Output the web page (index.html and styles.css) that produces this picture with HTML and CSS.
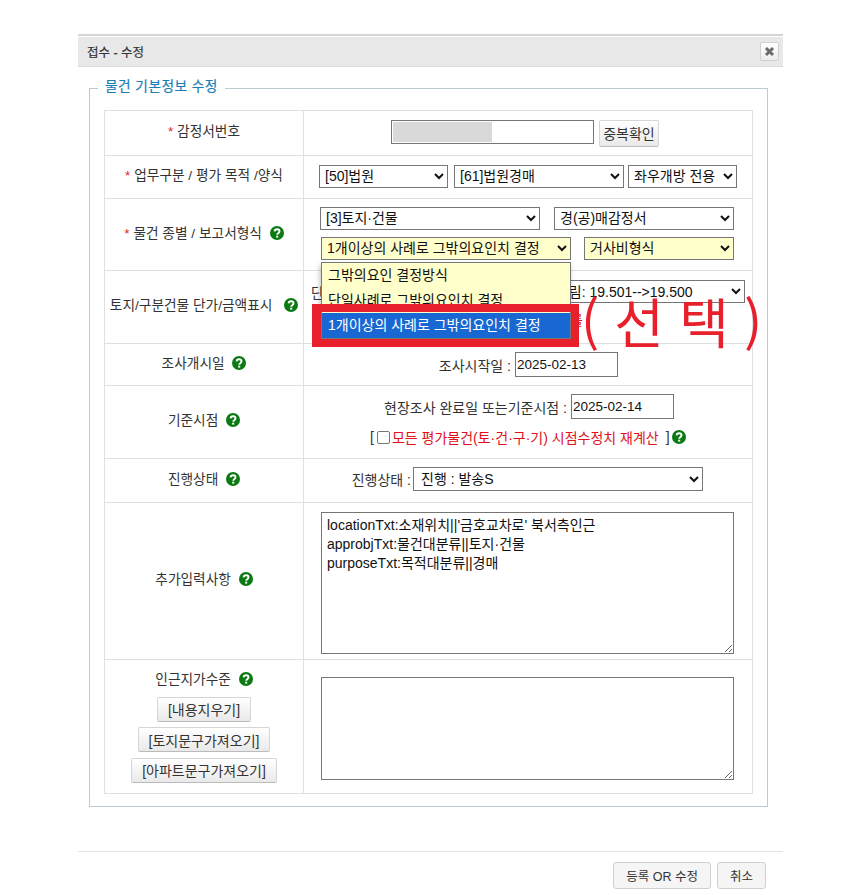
FILE: index.html
```html
<!DOCTYPE html>
<html lang="ko">
<head>
<meta charset="utf-8">
<title>접수 - 수정</title>
<link rel="stylesheet" href="styles.css">
</head>
<body>
<svg class="defs" width="0" height="0" aria-hidden="true">
  <symbol id="help" viewBox="0 0 14 14">
    <circle cx="7" cy="7" r="7" fill="#0b7a12"/>
    <path d="M4.6 5.4C4.7 4 5.7 3.2 7.1 3.2c1.400 0 2.400.8 2.400 2 0 1-.6 1.500-1.300 2-.6.4-.9.700-.9 1.500" fill="none" stroke="#fff" stroke-width="1.900"/>
    <rect x="6.200" y="9.700" width="2" height="1.900" fill="#fff"/>
  </symbol>
</svg>
<main class="modal">
  <header class="modal-head">
    <h1 class="modal-title">접수 - 수정</h1>
    <button class="close" type="button" aria-label="닫기">
      <svg width="11" height="11" viewBox="0 0 11 11"><path d="M2 2l7 7M9 2l-7 7" stroke="#6b6b6b" stroke-width="3"/></svg>
    </button>
  </header>
  <div class="modal-body">
    <fieldset class="box">
      <legend class="box-title">물건 기본정보 수정</legend>
      <table class="form">
        <colgroup><col class="col-label"><col class="col-value"></colgroup>
        <tr class="r1">
          <th><span class="req">*</span> 감정서번호</th>
          <td>
            <div class="line line-id">
              <span class="text-input id-input"><span class="masked"></span></span>
              <button class="btn btn-dup" type="button">중복확인</button>
            </div>
          </td>
        </tr>
        <tr class="r2">
          <th><span class="req">*</span> 업무구분 / 평가 목적 /양식</th>
          <td>
            <div class="line line-work">
              <select class="s-work"><option>[50]법원</option></select>
              <select class="s-purpose"><option>[61]법원경매</option></select>
              <select class="s-form"><option>좌우개방 전용</option></select>
            </div>
          </td>
        </tr>
        <tr class="r3">
          <th><span class="req">*</span> 물건 종별 / 보고서형식 <svg class="help"><use href="#help"/></svg></th>
          <td class="kind-cell">
            <div class="line line-kind">
              <select class="s-kind"><option>[3]토지·건물</option></select>
              <select class="s-report"><option>경(공)매감정서</option></select>
            </div>
            <div class="line line-other">
              <select class="s-other yellow"><option>1개이상의 사례로 그밖의요인치 결정</option></select>
              <select class="s-cost yellow"><option>거사비형식</option></select>
            </div>
            <ul class="drop">
              <li>그밖의요인 결정방식</li>
              <li>단일사례로 그밖의요인치 결정</li>
              <li class="on">1개이상의 사례로 그밖의요인치 결정</li>
            </ul>
            <span class="mark"></span>
            <span class="mark-text">( 선 택 )</span>
          </td>
        </tr>
        <tr class="r4">
          <th>토지/구분건물 단가/금액표시 <svg class="help"><use href="#help"/></svg></th>
          <td>
            <div class="line line-price">
              <span>단가 :</span>
              <select class="s-round"><option>반올림: 19.501--&gt;19.500</option></select>
            </div>
            <p class="price-note red">금액 표시를</p>
          </td>
        </tr>
        <tr class="r5">
          <th>조사개시일 <svg class="help"><use href="#help"/></svg></th>
          <td>
            <div class="line line-start">
              <span>조사시작일 :</span>
              <span class="text-input date">2025-02-13</span>
            </div>
          </td>
        </tr>
        <tr class="r6">
          <th>기준시점 <svg class="help"><use href="#help"/></svg></th>
          <td>
            <div class="line line-base">
              <span>현장조사 완료일 또는기준시점 :</span>
              <span class="text-input date">2025-02-14</span>
            </div>
            <div class="line line-recalc">
              <span>[</span>
              <span class="check"></span>
              <span class="red recalc-text">모든 평가물건(토·건·구·기) 시점수정치 재계산</span>
              <span>]</span>
              <svg class="help help-tight"><use href="#help"/></svg>
            </div>
          </td>
        </tr>
        <tr class="r7">
          <th>진행상태 <svg class="help"><use href="#help"/></svg></th>
          <td>
            <div class="line line-state">
              <span>진행상태 :</span>
              <select class="s-state"><option>진행 : 발송S</option></select>
            </div>
          </td>
        </tr>
        <tr class="r8">
          <th>추가입력사항 <svg class="help"><use href="#help"/></svg></th>
          <td>
            <textarea class="area area-extra">locationTxt:소재위치||'금호교차로' 북서측인근
approbjTxt:물건대분류||토지·건물
purposeTxt:목적대분류||경매</textarea>
          </td>
        </tr>
        <tr class="r9">
          <th>
            <div class="near-title">인근지가수준 <svg class="help"><use href="#help"/></svg></div>
            <div class="near-btns">
              <button class="btn" type="button">[내용지우기]</button>
              <button class="btn" type="button">[토지문구가져오기]</button>
              <button class="btn" type="button">[아파트문구가져오기]</button>
            </div>
          </th>
          <td><textarea class="area area-near"></textarea></td>
        </tr>
      </table>
    </fieldset>
  </div>
  <footer class="modal-foot">
    <button class="foot-btn" type="button">등록 OR 수정</button>
    <button class="foot-btn" type="button">취소</button>
  </footer>
</main>
</body>
</html>
```
FILE: styles.css
```css
* { box-sizing: border-box; }
html, body { margin: 0; padding: 0; background: #fff; }
body {
  height: 895px;
  overflow: hidden;
  color: #333;
  font-family: "Liberation Sans", "Noto Sans CJK KR", sans-serif;
  font-size: 14px;
}
.defs { position: absolute; }
.modal {
  width: 705px;
  margin: 34px 0 0 78px;
  border-top: 2px solid #d4d4d4;
}
.modal-head {
  display: flex;
  align-items: center;
  justify-content: space-between;
  height: 30px;
  margin-top: 1px;
  padding: 0 4px 0 9px;
  background: #e8e8e8;
  border-bottom: 1px solid #dcdcdc;
}
.modal-title { margin: 0; font-size: 12.500px; font-weight: 400; color: #333; -webkit-text-stroke: .2px #333; }
.close {
  display: flex;
  align-items: center;
  justify-content: center;
  width: 19px;
  height: 19px;
  padding: 0;
  border: 1px solid #d0d0d0;
  border-radius: 2px;
  background: linear-gradient(#fff, #ececec);
}
.modal-body { padding: 11px 16px 0 11px; }
.box {
  width: 679px;
  height: 729px;
  margin: 0;
  padding: 12px 15px 0 14px;
  border: 1px solid #bccbd1;
  min-width: 0;
}
.box-title {
  margin-left: -6px;
  padding: 0 7px 3px;
  color: #1a7db8;
  font-size: 13.700px;
  line-height: 17px;
  letter-spacing: .45px;
  -webkit-text-stroke: .2px #1a7db8;
}
.form {
  width: 649px;
  border-collapse: collapse;
  table-layout: fixed;
}
.col-label { width: 199px; }
.form th, .form td {
  border: 1px solid #e0e0e0;
  padding: 0;
  vertical-align: middle;
}
.form th { font-weight: 400; font-size: 13.700px; text-align: center; color: #333; padding-bottom: 6px; }
.req { color: #e0262e; }
.red { color: #e0101c; }
.help { width: 14px; height: 14px; margin-left: 4px; vertical-align: -2px; }
.help-tight { margin-left: 0; }
.r4 .help { margin-left: 8px; }
.r1 { height: 45px; }
.r2 { height: 43px; }
.r3 { height: 72px; }
.r4 { height: 73px; }
.r5 { height: 42px; }
.r6 { height: 73px; }
.r7 { height: 44px; }
.r8 { height: 157px; }
.r9 { height: 134px; }
.form .r2 td { padding-bottom: 2px; }
.form .r3 td { padding-bottom: 3px; }
.form .r4 td { vertical-align: top; padding-top: 9px; }
.form .r7 td { padding-bottom: 3px; }
.form .r8 td { vertical-align: top; padding-top: 9px; }
select {
  height: 23px;
  padding: 0 0 0 1px;
  border: 1px solid #767676;
  border-radius: 0;
  background-color: #fff;
  color: #111;
  font: 14px "Liberation Sans", "Noto Sans CJK KR", sans-serif;
}
.yellow { background-color: #ffffcc; }
.line { display: flex; align-items: center; }
.text-input {
  display: block;
  border: 1px solid #767676;
  background: #fff;
  color: #111;
}
.line-id { padding-left: 87px; gap: 5px; align-items: flex-start; }
.id-input { width: 203px; height: 24px; padding: 1px; }
.masked { display: block; width: 99px; height: 20px; background: #d9d9d9; }
.btn {
  height: 26px;
  padding: 0 10px;
  border: 1px solid #d6d6d6;
  border-bottom-color: #bbb;
  border-radius: 2px;
  background: linear-gradient(#fff, #e9e9e9);
  color: #333;
  font: 14px "Liberation Sans", "Noto Sans CJK KR", sans-serif;
}
.btn-dup { width: 60px; height: 27px; padding: 0; }
.line-work { padding-left: 15px; gap: 6px; }
.s-work { width: 129px; }
.s-purpose { width: 170px; }
.s-form { width: 109px; margin-left: -2px; }
.kind-cell { position: relative; }
.line-kind { padding-left: 16px; gap: 14px; }
.s-kind { width: 220px; }
.s-report { width: 180px; }
.line-other { padding: 7px 0 0 17px; gap: 13px; }
.s-other { width: 250px; }
.s-cost { width: 150px; }
.drop {
  position: absolute;
  z-index: 2;
  left: 17px;
  top: 63px;
  width: 250px;
  margin: 0;
  padding: 0;
  list-style: none;
  background: #ffffcc;
  border: 1px solid #777;
  box-shadow: -1px 3px 5px rgba(0,0,0,.25);
  color: #111;
}
.drop li { height: 25px; padding: 0 6px; line-height: 24px; }
.drop .on { background: #1967d2; color: #fff; }
.mark {
  position: absolute;
  z-index: 3;
  left: 8px;
  top: 105px;
  width: 267px;
  height: 43px;
  border: 8px solid #e7202c;
  border-left-width: 9px;
}
.mark-text {
  position: absolute;
  z-index: 3;
  left: 277px;
  top: 89px;
  color: #e7202c;
  font-size: 54px;
  font-weight: 400;
  line-height: 66px;
  white-space: pre;
  font-family: "Noto Sans CJK KR", sans-serif;
}
.line-price { justify-content: space-between; padding: 0 7px; }
.s-round { width: 208px; }
.price-note { margin: 7px 0 0; padding-right: 169px; text-align: right; line-height: 20px; }
.line-start, .line-base, .line-state { justify-content: flex-end; gap: 4px; }
.line-start { padding-right: 134px; }
.line-base { padding-right: 78px; }
.date { width: 103px; height: 25px; padding: 0 1px; line-height: 23px; font-size: 13.500px; }
.line-recalc { padding: 8px 0 0 66px; gap: 2px; margin-bottom: 3px; }
.recalc-text { margin-right: 5px; }
.check {
  width: 13px;
  height: 13px;
  margin-left: 1px;
  border: 1px solid #767676;
  border-radius: 2px;
  background: #fff;
}
.line-state { padding-right: 49px; gap: 2px; }
.s-state { width: 290px; height: 24px; padding-left: 3px; }
.area {
  display: block;
  width: 413px;
  margin-left: 17px;
  padding: 3px 5px;
  border: 1px solid #767676;
  background: #fff;
  color: #111;
  font: 14px/19px "Liberation Sans", "Noto Sans CJK KR", sans-serif;
  overflow: hidden;
}
.area-extra { height: 142px; }
.area-near { height: 103px; margin-top: 3px; }
.near-title { line-height: 20px; margin-top: 5px; }
.near-btns { display: flex; flex-direction: column; align-items: center; margin-top: 7px; gap: 5.500px; }
.near-btns .btn { height: 25px; white-space: nowrap; }
.modal-foot {
  display: flex;
  justify-content: flex-end;
  gap: 6px;
  height: 44px;
  margin-top: 44px;
  padding: 10px 17px 0 0;
  border-top: 1px solid #e2e2e2;
}
.foot-btn {
  height: 27px;
  padding: 0 12px;
  border: 1px solid #d0d0d0;
  border-radius: 3px;
  background: #f5f5f5;
  color: #333;
  font: 12.500px "Liberation Sans", "Noto Sans CJK KR", sans-serif;
}
```
